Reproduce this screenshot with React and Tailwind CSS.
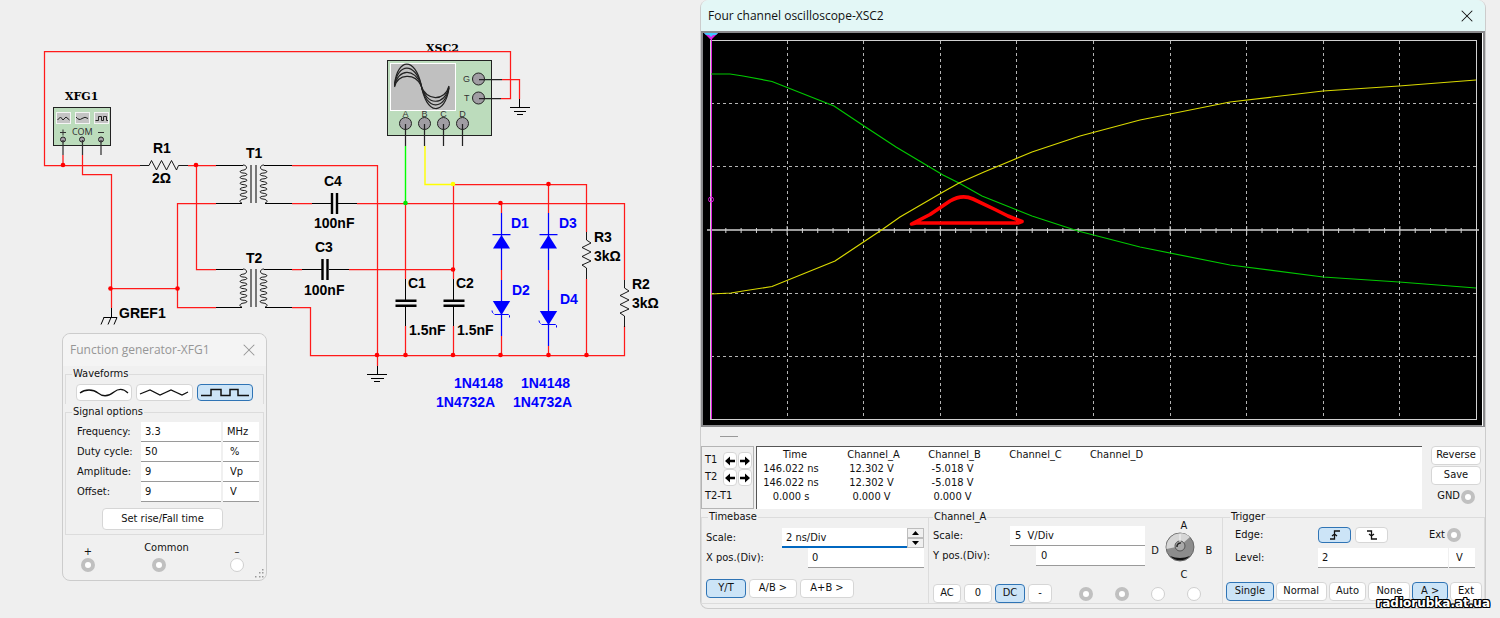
import React from 'react';
import { X } from 'lucide-react';
import clsx from 'clsx';

const RED = '#ff1a1a';
const BLUE = '#0000ff';

const Wire = ({ d, color = RED, width = 1.25 }) => (
    <path d={d} fill="none" stroke={color} strokeWidth={width} />
);

const Dot = ({ x, y, color = '#ff0000' }) => <circle cx={x} cy={y} r="2.3" fill={color} />;

const Label = ({ x, y, color = '#000', children }) => (
    <text x={x} y={y} fill={color} fontSize="14" fontWeight="bold">{children}</text>
);

const coilPath = (x, top, dir) => {
    let d = `M${x} ${top} c${4 * dir} 0 ${5 * dir} 4 ${1 * dir} 5`;
    for (let i = 0; i < 5; i++) {
        d += ` c${-5 * dir} 0.6 ${-5 * dir} 2.6 ${-1 * dir} 3 c${5 * dir} 0.2 ${5 * dir} 2.4 ${1 * dir} 2.8`;
    }
    return `${d} c${-5 * dir} 0.6 ${-5 * dir} 3.5 ${-2 * dir} 4`;
};

const Transformer = ({ top }) => (
    <g fill="none" stroke="#000">
        <path d={coilPath(243, top, 1)} strokeWidth="0.9" />
        <path d={coilPath(264, top, -1)} strokeWidth="0.9" />
        <path d={`M251 ${top} v38 M256 ${top} v38`} stroke="#444" strokeWidth="1.4" />
        <Wire color="#000" width={1} d={`M216 ${top + 0.5} h27 M216 ${top + 38.5} h26 M264 ${top + 0.5} h28 M265 ${top + 38.5} h27`} />
    </g>
);

const Diode = ({ x, y }) => (
    <g>
        <Wire color={BLUE} d={`M${x} 213 V270 M${x - 9} ${y}.5 h18`} />
        <path d={`M${x} ${y + 1} l8.5 13.5 h-17 z`} fill={BLUE} />
    </g>
);

const Zener = ({ x, y }) => (
    <g>
        <Wire color={BLUE} d={`M${x} ${y - 20} V${y + 36}`} />
        <path d={`M${x} ${y + 15} l-8.7 -14 h17.4 z`} fill={BLUE} />
        <path d={`M${x - 9.5} ${y + 10.5} q0 2 1.5 3 M${x - 7} ${y + 14.5} h14 l1 1 v2`} fill="none" stroke={BLUE} />
    </g>
);

const VerticalResistor = ({ x, y }) => (
    <path
        d={`M${x} ${y - 8} V${y} l4.5 3 l-9 4.5 l9 4.5 l-9 4.5 l9 4.5 l-9 4 l4.5 3 v11`}
        fill="none"
        stroke="#000"
        strokeWidth="0.9"
    />
);

const VerticalCapacitor = ({ x }) => (
    <g>
        <Wire color="#000" width={1} d={`M${x} 279 V300 M${x} 307 V326`} />
        <path d={`M${x - 10} 300.7 h21 M${x - 10} 305.8 h21`} stroke="#000" strokeWidth="2.5" />
    </g>
);

const GeneratorSymbol = () => (
    <g>
        <text x="65" y="100" fontSize="11" fontWeight="bold" className="font-['DejaVu_Serif',serif]">XFG1</text>
        <rect x="53.5" y="107.5" width="57" height="38" fill="#bcdcbc" stroke="#222" />
        <g fill="#c4c4c4" stroke="#f4f4f4">
            <rect x="56.5" y="112.5" width="14" height="11" />
            <rect x="75.5" y="112.5" width="14" height="11" />
            <rect x="94.5" y="112.5" width="14" height="11" />
        </g>
        <g fill="none" stroke="#222">
            <path d="M57.5 120 l3 -3 l2.5 3 l3 -3 l3.500 3" />
            <path d="M76 117 q3 4 6 1.500 t6 0" />
            <path d="M95.500 120.500 h3 v-4 h3 v4 h2 v-4 h3 v4 h1.500" />
        </g>
        <path d="M60 132.500 h6 M63 129.500 v6 M98 132.500 h6" stroke="#333" />
        <text x="72" y="135" fontSize="9" fill="#333" className="font-['Noto_Sans',sans-serif]">COM</text>
        <g fill="#a5a0a8" stroke="#222">
            <circle cx="63" cy="139.500" r="2.500" />
            <circle cx="82" cy="139.500" r="2.500" />
            <circle cx="101" cy="139.500" r="2.500" />
        </g>
        <Wire color="#333" d="M63 140 V155 M82.5 140 V155 M101 140 V155" />
    </g>
);

const terminals = [
    { name: 'A', x: 405.5 },
    { name: 'B', x: 424.5 },
    { name: 'C', x: 443.5 },
    { name: 'D', x: 462.5 },
];

const ScopeSymbol = () => (
    <g>
        <text x="426" y="52" fontSize="11" fontWeight="bold" className="font-['DejaVu_Serif',serif]">XSC2</text>
        <rect x="387.5" y="60.5" width="104" height="75" fill="#bcdcbc" stroke="#222" />
        <rect x="390.5" y="63.5" width="65" height="47" fill="#c0c0c0" stroke="#fff" />
        <g fill="none" stroke="#222" strokeWidth="1.2">
            {[0, 4, 8, 12].map((o) => (
                <path key={o} d={`M394.5 ${84 + o / 4} C398 ${57.5 + o * 1.3} 415 ${57.5 + o * 1.3} 421 ${84 + o / 8} C426 ${116 - o * 1.2} 445 ${116 - o * 1.2} 449 ${88 - o / 6}`} />
            ))}
        </g>
        <g fontSize="9" fill="#333">
            {terminals.map((t) => <text key={t.name} x={t.x} y="117" textAnchor="middle">{t.name}</text>)}
            <text x="463" y="82">G</text>
            <text x="464" y="101">T</text>
        </g>
        <g fill="#a09da3" stroke="#222">
            {terminals.map((t) => <circle key={t.name} cx={t.x} cy="123.500" r="6" />)}
            <circle cx="478.500" cy="79" r="6" />
            <circle cx="478.500" cy="98" r="6" />
        </g>
        {terminals.map((t) => <Wire key={t.name} color="#222" d={`M${t.x} 124 V146`} />)}
        <Wire color="#222" d="M479 79.5 H502 M479 98.5 H501" />
    </g>
);

const Schematic = () => (
    <svg viewBox="0 0 700 618" className="block w-full font-['Liberation_Sans',Arial,sans-serif]" role="img" aria-label="Schematic">
        <ScopeSymbol />
        <GeneratorSymbol />

        <Wire d="M501 98.5 H510.5 V51.5 H44.5 V165.5 H140 M502 79.5 H519.5 V99" />
        <Wire d="M63 155 V165 M82.5 155 V174.5 H111.5 V308 M111 288.5 H177" />
        <Wire d="M188 165.5 H216 M196.5 165 V269.5 H216 M216 203.5 H177.5 V307.5 H216" />
        <Wire d="M292 165.5 H377.5 V366 M292 203.5 H312 M357 203.5 H624.5 V280" />
        <Wire d="M292 269.5 H302 M349 269.5 H453 M292 307.5 H310.5 V355.5 H624.5 V326" />
        <Wire d="M405.5 203 V279 M405.5 326 V355 M453.5 279 V184.5 H586.5 V232 M453.5 326 V355" />
        <Wire d="M501.5 203 V213 M501.5 270 V280 M501.5 336 V355" />
        <Wire d="M548.5 184 V213 M548.5 270 V290 M548.5 346 V355 M586.5 279 V355" />
        <Wire color="#00ff00" width={1.4} d="M405.5 146 V203" />
        <Wire color="#ffff00" width={1.4} d="M425 146 V184.5 H453" />

        {/* grounds */}
        <Wire color="#000" width={1} d="M519.5 99 V107 M510 107.5 H530 M514 111.5 H526 M517 114.5 H523" />
        <Wire color="#000" width={1} d="M377.5 366 V374 M367 374.5 H387 M371 378.5 H384 M374 381.5 H380" />
        <path d="M111.5 308 V317.5 M103.500 317.500 H117 M104 317.500 l-3 7 M111 317.500 l-3 7 M117 317.500 l-3 7" fill="none" stroke="#000" />

        <path d="M140 165.5 H149 l2.500 -5 l5 9.500 l5 -9.500 l5 9.500 l5 -9.500 l5 9.500 l2 -4.500 H188" fill="none" stroke="#000" strokeWidth="0.9" />
        <VerticalResistor x={586.5} y={240} />
        <VerticalResistor x={624.5} y={288} />
        <Transformer top={165} />
        <Transformer top={269} />

        <Wire color="#000" width={1} d="M312 203.5 H332 M338 203.5 H357 M302 269.5 H322 M329 269.5 H349" />
        <path d="M332 193 v21 M337 193 v21 M322.500 259 v21 M327.500 259 v21" stroke="#000" strokeWidth="2.4" />
        <VerticalCapacitor x={405.5} />
        <VerticalCapacitor x={453.5} />

        <Diode x={501.5} y={234} />
        <Diode x={548.5} y={234} />
        <Zener x={501.5} y={300} />
        <Zener x={548.5} y={310} />

        {[[63, 165], [196, 165], [110.5, 288.5], [177.5, 288.5], [548.5, 184], [500.5, 203], [453, 269.5]].map(([x, y]) => (
            <Dot key={`${x}-${y}`} x={x} y={y} />
        ))}
        {[377, 405.5, 453, 500.5, 548.5, 586.5].map((x) => <Dot key={x} x={x} y={355} />)}
        <Dot x={405.5} y={203} color="#00e600" />
        <Dot x={453} y={184} color="#ffff00" />

        <g fill="#111">
            <Label x={153} y={153}>R1</Label>
            <Label x={152} y={183}>2Ω</Label>
            <Label x={246} y={158}>T1</Label>
            <Label x={246} y={263}>T2</Label>
            <Label x={324} y={186}>C4</Label>
            <Label x={314} y={228}>100nF</Label>
            <Label x={315} y={252}>C3</Label>
            <Label x={304} y={295}>100nF</Label>
            <Label x={408} y={288}>C1</Label>
            <Label x={456} y={288}>C2</Label>
            <Label x={409} y={335}>1.5nF</Label>
            <Label x={457} y={335}>1.5nF</Label>
            <Label x={594} y={242}>R3</Label>
            <Label x={594} y={261}>3kΩ</Label>
            <Label x={632} y={289}>R2</Label>
            <Label x={632} y={308}>3kΩ</Label>
            <Label x={119} y={318}>GREF1</Label>
        </g>
        <Label x={511} y={228} color={BLUE}>D1</Label>
        <Label x={559} y={228} color={BLUE}>D3</Label>
        <Label x={512} y={295} color={BLUE}>D2</Label>
        <Label x={560} y={304} color={BLUE}>D4</Label>
        <Label x={454} y={388} color={BLUE}>1N4148</Label>
        <Label x={521} y={388} color={BLUE}>1N4148</Label>
        <Label x={436} y={407} color={BLUE}>1N4732A</Label>
        <Label x={513} y={407} color={BLUE}>1N4732A</Label>
    </svg>
);

const Button = ({ active, className, children, ...props }) => (
    <button
        type="button"
        aria-pressed={active}
        className={clsx(
            'flex items-center justify-center rounded-sm border whitespace-nowrap',
            active ? 'border-[#2f74b5] bg-[#cce4f7]' : 'border-[#d6d6d6] bg-white',
            className
        )}
        {...props}
    >
        {children}
    </button>
);

const Field = ({ className, ...props }) => (
    <input type="text" className={clsx('h-5 min-w-0 border-b border-[#9a9a9a] bg-white', className)} {...props} />
);

const Port = ({ label, on }) => (
    <input
        type="radio"
        aria-label={label}
        className={clsx(
            'block size-[14px] shrink-0 appearance-none rounded-full bg-white',
            on ? 'border-4 border-[#c0c0c0]' : 'border border-[#cfcfcf]'
        )}
    />
);

const signalRows = [
    { id: 'frequency', label: 'Frequency:', value: '3.3', unit: 'MHz' },
    { id: 'duty', label: 'Duty cycle:', value: '50', unit: '%' },
    { id: 'amplitude', label: 'Amplitude:', value: '9', unit: 'Vp' },
    { id: 'offset', label: 'Offset:', value: '9', unit: 'V' },
];

const FunctionGenerator = () => (
    <section className="absolute top-[333px] left-[62px] w-[205px] rounded-lg border border-[#cccccc] bg-[#f0f0f0] pb-2">
        <header className="flex h-8 items-center justify-between rounded-t-lg bg-[#f4f4f4] pr-[7px] pl-[7px] font-['Open_Sans',sans-serif] text-xs text-[#969696]">
            <h2>Function generator-XFG1</h2>
            <button type="button" aria-label="Close"><X size={20} strokeWidth={1.25} /></button>
        </header>
        <div className="mx-[2px]">
            <fieldset className="min-w-0 border border-b-0 border-[#dcdcdc] px-[10px] pb-[3px]">
                <legend className="-ml-1 px-px leading-4">Waveforms</legend>
                <div className="flex gap-1 pt-[2px]">
                    <Button className="h-[17px] flex-1" aria-label="Sine">
                        <svg width="50" height="9" viewBox="0 0 50 9" fill="none" stroke="#111" strokeWidth="1.3">
                            <path d="M1 5 C6 1 14 1 19 5 S30 8 35 4 S45 1 49 5" />
                        </svg>
                    </Button>
                    <Button className="h-[17px] flex-1" aria-label="Triangle">
                        <svg width="50" height="9" viewBox="0 0 50 9" fill="none" stroke="#111" strokeWidth="1.3">
                            <path d="M1 6 L11 2 L21 7 L32 2 L43 7 L49 4" />
                        </svg>
                    </Button>
                    <Button active className="h-[17px] flex-1" aria-label="Square">
                        <svg width="50" height="9" viewBox="0 0 50 9" fill="none" stroke="#111" strokeWidth="1.5">
                            <path d="M1 7.500 H11 V1.500 H21 V7.500 H30 V1.500 H38 V7.500 H49" />
                        </svg>
                    </Button>
                </div>
            </fieldset>
            <fieldset className="min-w-0 border border-[#dcdcdc] pr-1 pb-1 pl-[11px]">
                <legend className="-ml-[5px] px-px leading-4">Signal options</legend>
                {signalRows.map((row) => (
                    <div key={row.id} className="flex h-5 items-center gap-[2px] first-of-type:mt-[2px]">
                        <label htmlFor={row.id} className="w-[62px] shrink-0">{row.label}</label>
                        <Field id={row.id} defaultValue={row.value} className="flex-1 pl-1" />
                        <Field aria-label={`${row.label} unit`} defaultValue={row.unit} className={clsx('w-9 shrink-0', row.unit === 'MHz' ? 'pl-1' : 'pl-[7px]')} />
                    </div>
                ))}
                <Button className="mt-[6px] ml-[25px] h-[22px] w-[121px]">Set rise/Fall time</Button>
            </fieldset>
        </div>
        <div className="flex justify-between px-[18px] pt-[5px]">
            <div className="flex flex-col items-center justify-end"><span className="leading-3">+</span><Port label="Plus" on /></div>
            <div className="ml-2 flex flex-col gap-[2px]"><span className="leading-4">Common</span><span className="pl-2"><Port label="Common" on /></span></div>
            <div className="flex flex-col items-center justify-end pr-1"><span className="leading-3">–</span><Port label="Minus" /></div>
        </div>
        <svg className="absolute right-[2px] bottom-[2px]" width="9" height="9" viewBox="0 0 9 9" fill="#999">
            <path d="M7 0h1.500v1.500H7z M4 3h1.500v1.500H4z M7 3h1.500v1.500H7z M0 7h1.500v1.500H0z M4 7h1.500v1.500H4z M7 7h1.500v1.500H7z" />
        </svg>
    </section>
);

const ticks = Array.from({ length: 49 }, (_, i) => i + 1);

const Plot = () => (
    <svg viewBox="701 31 784 396" className="block w-full" role="img" aria-label="Oscilloscope trace">
        <rect x="701" y="31" width="784" height="396" fill="#8a8a8c" />
        <rect x="703" y="33" width="780" height="392" fill="#000" />
        <rect x="1482" y="33" width="1" height="393" fill="#fff" />
        <g fill="none" stroke="#b4b4b4" strokeDasharray="3 3" shapeRendering="crispEdges">
            {[1, 2, 3, 4, 5, 6, 7, 8, 9].map((i) => <path key={i} d={`M${Math.floor(710.5 + i * 76.6)}.5 41 V419`} />)}
            {[103.5, 166.5, 293.5, 356.5].map((y) => <path key={y} d={`M711 ${y} H1476`} />)}
        </g>
        <g stroke="#d0d0d0" fill="none">
            <rect x="710.5" y="40.5" width="766" height="379" />
            <path d="M707 230 H1479" strokeWidth="1.3" />
            {ticks.map((i) => (
                <path key={i} d={i % 5 === 0 ? `M${710.5 + i * 15.32} 226 v9` : `M${710.5 + i * 15.32} 228 v5`} />
            ))}
        </g>
        <path d="M711.500 38 V419" stroke="#e020e0" />
        <path d="M704 33 h14 l-7 7 z" fill="#e020e0" />
        <path d="M704 33 h14 l-2 2 h-3 l-2 2 l-2 -2 h-3 z" fill="#40c8ff" />
        <circle cx="711" cy="199.500" r="2.500" fill="none" stroke="#e020e0" />
        <path
            d="M711 74 H730 L743 76 L772 81.5 L834 106 L864 126 L896 147 L943 175 L959 183 L982 196 L1017 210 L1032 216 L1078 231 L1140 247 L1230 265 L1323 277 L1399 282 L1476 288"
            fill="none"
            stroke="#00c800"
            strokeWidth="1.2"
        />
        <path
            d="M711 294 L731 293 L743 291 L772 286.5 L835 261 L883 229 L900 217 L943 192 L959 183 L984 172 L1032 152 L1080 136 L1140 120 L1230 102 L1323 91 L1399 86 L1476 80"
            fill="none"
            stroke="#d8d800"
            strokeWidth="1.2"
        />
        <path
            d="M911.500 224 L930 214.500 L950 201 Q962 194 973 199 L995 209.500 L1008 216 L1022 221.500 L1018 223 H916 Z"
            fill="none"
            stroke="#ff0000"
            strokeWidth="3.6"
            strokeLinejoin="round"
        />
    </svg>
);

const Arrow = ({ d }) => (
    <svg width="10" height="10" viewBox="0 0 10 10"><path d={d} /></svg>
);

const CursorButtons = ({ name }) => (
    <span className="flex gap-px">
        <Button className="h-[17px] w-[14px]" aria-label={`${name} left`}><Arrow d="M0 5 L5 0.500 V3.800 H10 V6.200 H5 V9.500 z" /></Button>
        <Button className="h-[17px] w-[14px]" aria-label={`${name} right`}><Arrow d="M10 5 L5 0.500 V3.800 H0 V6.200 H5 V9.500 z" /></Button>
    </span>
);

const readings = [
    ['146.022 ns', '12.302 V', '-5.018 V'],
    ['146.022 ns', '12.302 V', '-5.018 V'],
    ['0.000 s', '0.000 V', '0.000 V'],
];

const Readout = () => (
    <div className="flex h-[63px] gap-[2px] pr-1">
        <div className="flex w-[53px] shrink-0 flex-col border border-[#b4b4b4] pt-[5px] pl-[3px]">
            <div className="flex h-[17px] items-center justify-between pr-px">T1 <CursorButtons name="T1" /></div>
            <div className="flex h-[17px] items-center justify-between pr-px">T2 <CursorButtons name="T2" /></div>
            <div className="flex h-5 items-center">T2-T1</div>
        </div>
        <div className="flex-1 border-t border-l border-[#555] bg-white pt-px">
            <table className="table-fixed leading-[14px]">
                <thead>
                    <tr>
                        <th className="w-[76px] p-0 font-normal">Time</th>
                        <th className="w-[81px] p-0 font-normal">Channel_A</th>
                        <th className="w-[81px] p-0 font-normal">Channel_B</th>
                        <th className="w-[81px] p-0 font-normal">Channel_C</th>
                        <th className="w-[81px] p-0 font-normal">Channel_D</th>
                    </tr>
                </thead>
                <tbody>
                    {readings.map((row, i) => (
                        <tr key={i}>
                            {row.map((cell, j) => <td key={j} className={clsx('p-0 text-center', j === 0 ? 'pr-2' : 'pr-1')}>{cell}</td>)}
                            <td />
                            <td />
                        </tr>
                    ))}
                </tbody>
            </table>
        </div>
        <div className="ml-[7px] flex w-[50px] shrink-0 flex-col gap-px">
            <Button className="h-[19px]">Reverse</Button>
            <Button className="h-[19px]">Save</Button>
            <label className="flex h-[21px] items-center justify-end gap-px pr-[6px]">GND <Port label="GND" on /></label>
        </div>
    </div>
);

const Timebase = () => (
    <fieldset className="w-[228px] min-w-0 shrink-0 border border-[#dcdcdc] px-1">
        <legend className="ml-[2px] px-px leading-[14px]">Timebase</legend>
        <div className="mt-1 flex h-5 items-center">
            <label htmlFor="tb-scale" className="w-[76px] shrink-0">Scale:</label>
            <Field id="tb-scale" defaultValue="2 ns/Div" className="flex-1 border-b-2 border-b-[#0067c0] pl-1" />
            <span className="flex flex-col">
                <button type="button" aria-label="Increase" className="flex h-[10px] w-[17px] items-center justify-center border border-[#bdbdbd]">
                    <svg width="7" height="4" viewBox="0 0 7 4"><path d="M0 4 L3.500 0 L7 4 z" /></svg>
                </button>
                <button type="button" aria-label="Decrease" className="flex h-[10px] w-[17px] items-center justify-center border border-[#bdbdbd]">
                    <svg width="7" height="4" viewBox="0 0 7 4"><path d="M0 0 L3.500 4 L7 0 z" /></svg>
                </button>
            </span>
        </div>
        <div className="flex h-5 items-center">
            <label htmlFor="tb-x" className="w-[102px] shrink-0">X pos.(Div):</label>
            <Field id="tb-x" defaultValue="0" className="flex-1 pl-1" />
        </div>
        <div className="mt-[11px] flex gap-[3px]">
            <Button active className="h-[19px] w-10">Y/T</Button>
            <Button className="h-[19px] w-12">A/B &gt;</Button>
            <Button className="h-[19px] w-[54px]">A+B &gt;</Button>
        </div>
    </fieldset>
);

const Knob = () => (
    <div className="-mt-1 grid grid-cols-[20px_30px_20px] items-center justify-items-center leading-[12px]">
        <span className="col-start-2 pl-2">A</span>
        <span className="col-start-1 row-start-2 pt-2">D</span>
        <svg className="col-start-2 row-start-2" width="30" height="30" viewBox="0 0 30 30">
            <circle cx="15" cy="15" r="14" fill="#8c8c8c" stroke="#555" strokeWidth="0.800" />
            <path d="M1.500 17 A14 14 0 0 1 25 5 L17 12 L11 15 z" fill="#d6d6d6" />
            <path d="M5 24 A14 14 0 0 0 25 24 Q15 28 5 24" fill="#111" />
            <circle cx="15" cy="14" r="5" fill="#aaa" stroke="#555" />
            <path d="M15 2 V12" stroke="#f4f4f4" />
            <path d="M12 15 a3.500 3.500 0 0 1 4 -4" fill="none" stroke="#222" strokeWidth="1.500" />
        </svg>
        <span className="col-start-3 row-start-2 pt-2 pl-2">B</span>
        <span className="col-start-2 row-start-3 pt-[7px] pl-2">C</span>
    </div>
);

const ChannelA = () => (
    <fieldset className="min-w-0 flex-1 border border-l-0 border-[#dcdcdc] pr-2 pl-1">
        <legend className="px-px leading-[14px]">Channel_A</legend>
        <div className="flex items-start justify-between">
            <div className="w-[212px] pt-[2px]">
                <div className="flex h-5 items-center">
                    <label htmlFor="ch-scale" className="w-[77px] shrink-0">Scale:</label>
                    <Field id="ch-scale" defaultValue="5  V/Div" className="flex-1 pl-[5px]" />
                </div>
                <div className="flex h-5 items-center">
                    <label htmlFor="ch-y" className="w-[103px] shrink-0">Y pos.(Div):</label>
                    <Field id="ch-y" defaultValue="0" className="flex-1 pl-[5px]" />
                </div>
            </div>
            <Knob />
        </div>
        <div className="mt-[3px] flex items-center gap-[3px]">
            <Button className="h-[19px] w-7">AC</Button>
            <Button className="h-[19px] w-7">0</Button>
            <Button active className="h-[19px] w-[30px]">DC</Button>
            <Button className="h-[19px] w-6">-</Button>
            <span className="ml-auto flex gap-[22px] pr-[13px]">
                <Port label="Channel A" on />
                <Port label="Channel B" on />
                <Port label="Channel C" />
                <Port label="Channel D" />
            </span>
        </div>
    </fieldset>
);

const Trigger = () => (
    <fieldset className="w-[262px] min-w-0 shrink-0 border border-l-0 border-[#dcdcdc] pr-[2px] pl-[3px]">
        <legend className="ml-1 px-px leading-[14px]">Trigger</legend>
        <div className="flex h-[22px] items-center pl-[9px]">
            <span className="w-[83px]">Edge:</span>
            <Button active className="h-4 w-[33px]" aria-label="Rising edge">
                <svg width="12" height="10" viewBox="0 0 12 10" fill="none" stroke="#111" strokeWidth="1.300"><path d="M1 9 H5.500 V1 H11 M3 6 L5.500 4 L8 6" /></svg>
            </Button>
            <Button className="ml-1 h-4 w-[33px]" aria-label="Falling edge">
                <svg width="12" height="10" viewBox="0 0 12 10" fill="none" stroke="#111" strokeWidth="1.300"><path d="M1 1 H5.500 V9 H11 M3 4 L5.500 6 L8 4" /></svg>
            </Button>
            <label className="ml-auto flex items-center gap-[2px] pr-[21px]">Ext <Port label="Ext" on /></label>
        </div>
        <div className="flex h-[22px] items-end gap-px pr-[7px] pl-[9px]">
            <label htmlFor="tr-level" className="w-[82px] shrink-0 leading-5">Level:</label>
            <Field id="tr-level" defaultValue="2" className="flex-1 pl-1" />
            <Field aria-label="Level unit" defaultValue="V" className="w-[26px] pl-[7px]" />
        </div>
        <div className="mt-[14px] flex gap-[2px]">
            <Button active className="h-[19px] w-12">Single</Button>
            <Button className="h-[19px] w-[51px]">Normal</Button>
            <Button className="h-[19px] w-[38px]">Auto</Button>
            <Button className="h-[19px] w-[42px]">None</Button>
            <Button active className="h-[19px] w-9">A &gt;</Button>
            <Button className="h-[19px] w-8">Ext</Button>
        </div>
    </fieldset>
);

const Oscilloscope = () => (
    <section className="min-w-0 flex-1 rounded-lg border border-t-0 border-[#cccccc] bg-[#f0f0f0] pb-1">
        <header className="flex h-[31px] items-center justify-between rounded-t-lg bg-[#e3f7f6] pr-2 pl-[7px] font-['Open_Sans',sans-serif] text-xs">
            <h1>Four channel oscilloscope-XSC2</h1>
            <button type="button" aria-label="Close"><X size={20} strokeWidth={1.25} /></button>
        </header>
        <Plot />
        <div className="flex h-[19px] items-center pl-[19px]"><hr className="w-[18px] border-[#999]" /></div>
        <Readout />
        <div className="mt-px flex">
            <Timebase />
            <ChannelA />
            <Trigger />
        </div>
    </section>
);

export default function App() {
    return (
        <main className="relative flex min-h-screen items-start bg-[#efefef] pr-[14px] font-['DejaVu_Sans_Condensed','Noto_Sans',sans-serif] text-[11px] text-[#111]">
            <div className="relative w-[700px] shrink-0">
                <Schematic />
                <FunctionGenerator />
            </div>
            <Oscilloscope />
            <a
                href="#"
                className="absolute right-[10px] bottom-2 font-['DejaVu_Sans',sans-serif] text-xs leading-[14px] font-bold text-white [text-shadow:1px_0_#000,-1px_0_#000,0_1px_#000,0_-1px_#000,1px_1px_#000,-1px_-1px_#000,1px_-1px_#000,-1px_1px_#000]"
            >
                radiorubka.at.ua
            </a>
        </main>
    );
}
